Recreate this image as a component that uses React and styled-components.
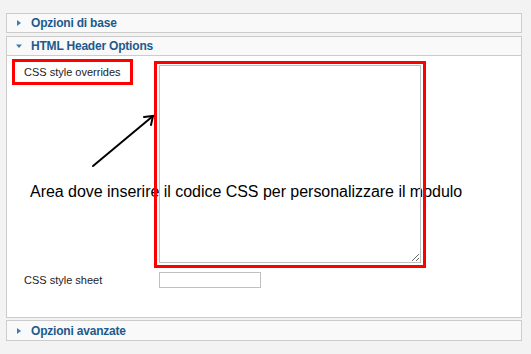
import React from "react";
import styled, { createGlobalStyle } from "styled-components";

const Global = createGlobalStyle`
  html, body { margin: 0; padding: 0; background: #f3f3f3; }
  body { font-family: "Liberation Sans", Arial, sans-serif; }
`;

const Page = styled.div`
  width: 531px;
  height: 354px;
  padding: 13px 0 0 6px;
  box-sizing: border-box;
  display: flex;
  flex-direction: column;
`;

const Panel = styled.div`
  width: 516px;
  box-sizing: border-box;
  border: 1px solid #cccccc;
  background: #ffffff;
  margin-bottom: ${(p) => p.$gap}px;
`;

const Header = styled.div`
  height: ${(p) => p.$h || 18}px;
  background: #f9f9f9;
  display: flex;
  align-items: center;
  padding-left: 9px;
  gap: 9px;
  border-bottom: ${(p) => (p.$open ? "1px solid #cccccc" : "none")};
  font-size: 12px;
  font-weight: bold;
  letter-spacing: -0.2px;
  color: #1d5a8c;
`;

const Toggle = styled.svg`
  width: 6px;
  height: 6px;
  flex: none;
`;

const Body = styled.div`
  position: relative;
  height: 261px;
  box-sizing: border-box;
  padding: 3px 0 0 5px;
  display: grid;
  grid-template-columns: 142px auto;
  grid-template-rows: auto auto;
  row-gap: 4px;
  align-content: start;
  justify-content: start;
`;

const LabelBox = styled.div`
  align-self: start;
  width: 121px;
  height: 26px;
  box-sizing: border-box;
  border: 3px solid #ff0000;
  padding-left: 9px;
  display: flex;
  align-items: center;
  font-size: 11px;
  color: #222;
`;

const Label = styled.div`
  padding-left: 12px;
  display: flex;
  align-items: center;
  font-size: 11px;
  color: #222;
`;

const HighlightBox = styled.div`
  position: relative;
  z-index: 1;
  margin-top: 2px;
  width: 272px;
  height: 207px;
  box-sizing: border-box;
  border: 3px solid #ff0000;
  padding: 1px 2px 2px 2px;
`;

const TextArea = styled.textarea`
  display: block;
  width: 262px;
  height: 198px;
  box-sizing: border-box;
  border: 1px solid #c0c0c0;
  background: transparent;
  margin: 0;
  padding: 0;
  resize: both;
  outline: none;
`;

const Input = styled.input`
  margin-left: 5px;
  width: 102px;
  height: 16px;
  box-sizing: border-box;
  border: 1px solid #c0c0c0;
  background: #fff;
  padding: 0;
  outline: none;
`;

const Note = styled.div`
  position: absolute;
  left: 23px;
  top: 127px;
  z-index: 0;
  font-size: 16px;
  letter-spacing: -0.03px;
  color: #000;
  white-space: nowrap;
`;

const Arrow = styled.svg`
  position: absolute;
  left: 0;
  top: 0;
  width: 200px;
  height: 200px;
  z-index: 2;
  pointer-events: none;
`;

const Right = () => (
  <Toggle viewBox="0 0 6 6">
    <path d="M1 0 L5 3 L1 6 Z" fill="#3a7db5" />
  </Toggle>
);
const Down = () => (
  <Toggle viewBox="0 0 6 6">
    <path d="M0 1.5 L6 1.5 L3 5 Z" fill="#3a7db5" />
  </Toggle>
);

export default function App() {
  return (
    <>
      <Global />
      <Page>
        <Panel $gap={3}>
          <Header>
            <Right />
            Opzioni di base
          </Header>
        </Panel>
        <Panel $gap={2}>
          <Header $open>
            <Down />
            HTML Header Options
          </Header>
          <Body>
            <LabelBox>CSS style overrides</LabelBox>
            <HighlightBox>
              <TextArea />
            </HighlightBox>
            <Label>CSS style sheet</Label>
            <Input />
            <Note>Area dove inserire il codice CSS per personalizzare il modulo</Note>
            <Arrow viewBox="0 0 200 200">
              <g stroke="#000" strokeWidth="2" fill="none" strokeLinecap="round">
                <line x1="86" y1="110" x2="146" y2="60" />
                <polyline points="137,61 146,60 144,69" />
              </g>
            </Arrow>
          </Body>
        </Panel>
        <Panel $gap={0}>
          <Header $h={19}>
            <Right />
            Opzioni avanzate
          </Header>
        </Panel>
      </Page>
    </>
  );
}
